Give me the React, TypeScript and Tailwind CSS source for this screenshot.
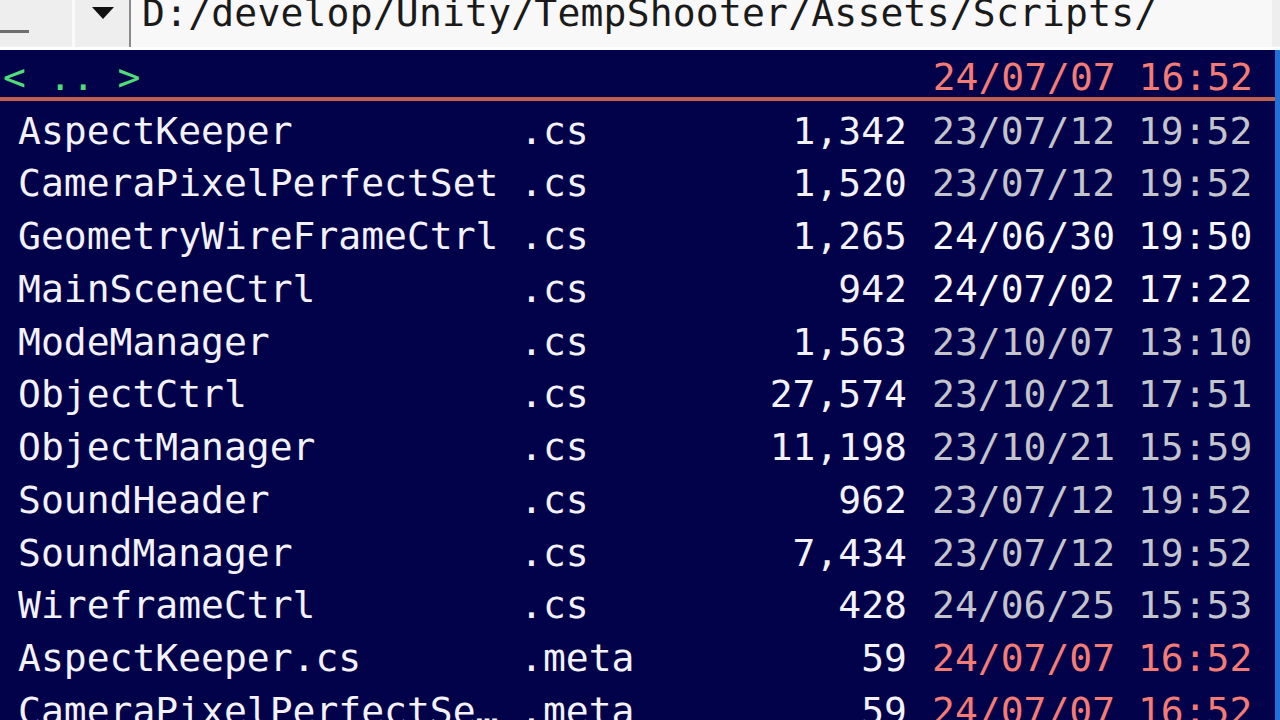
import React from 'react';

type Entry = {
  name: string;
  ext: string;
  size: string;
  date: string;
  tone: 'old' | 'recent' | 'today';
};

const entries: Entry[] = [
  { name: 'AspectKeeper', ext: '.cs', size: '1,342', date: '23/07/12 19:52', tone: 'old' },
  { name: 'CameraPixelPerfectSet', ext: '.cs', size: '1,520', date: '23/07/12 19:52', tone: 'old' },
  { name: 'GeometryWireFrameCtrl', ext: '.cs', size: '1,265', date: '24/06/30 19:50', tone: 'recent' },
  { name: 'MainSceneCtrl', ext: '.cs', size: '942', date: '24/07/02 17:22', tone: 'recent' },
  { name: 'ModeManager', ext: '.cs', size: '1,563', date: '23/10/07 13:10', tone: 'old' },
  { name: 'ObjectCtrl', ext: '.cs', size: '27,574', date: '23/10/21 17:51', tone: 'old' },
  { name: 'ObjectManager', ext: '.cs', size: '11,198', date: '23/10/21 15:59', tone: 'old' },
  { name: 'SoundHeader', ext: '.cs', size: '962', date: '23/07/12 19:52', tone: 'old' },
  { name: 'SoundManager', ext: '.cs', size: '7,434', date: '23/07/12 19:52', tone: 'old' },
  { name: 'WireframeCtrl', ext: '.cs', size: '428', date: '24/06/25 15:53', tone: 'old' },
  { name: 'AspectKeeper.cs', ext: '.meta', size: '59', date: '24/07/07 16:52', tone: 'today' },
  { name: 'CameraPixelPerfectSe\u2026', ext: '.meta', size: '59', date: '24/07/07 16:52', tone: 'today' },
];

const dateColor = {
  old: 'text-[#c4c4cc]',
  recent: 'text-[#f6f6f6]',
  today: 'text-[#f47c74]',
};

const mono = "font-['DejaVu_Sans_Mono','Liberation_Mono',monospace] text-[38px] whitespace-pre";

export default function App() {
  return (
    <div className={`w-[1280px] h-[720px] overflow-hidden flex flex-col bg-[#02024a] ${mono}`}>
      {/* Path bar */}
      <div className="h-[50px] flex bg-[#eeeeee] border-b-[3px] border-white shrink-0">
        <div className="w-[72px] flex flex-col pt-[30px]">
          <div className="w-[29px] h-[3px] bg-[#6e6e6e]" />
        </div>
        <div className="w-[3px] bg-[#fafafa]" />
        <div className="w-[54px] flex justify-center pt-[7px] pl-[2px]">
          <svg width="22" height="12" viewBox="0 0 22 12">
            <polygon points="0,0 22,0 11,12" fill="#111" />
          </svg>
        </div>
        <div className="w-[2px] bg-[#8a8a8a]" />
        <div className="flex-1 bg-[#f8f8f8] pl-[11px] overflow-hidden mr-[8px]">
          <div className="leading-[38px] mt-[-6px] text-[#1a1a1a] tracking-[0.2px]">D:/develop/Unity/TempShooter/Assets/Scripts/</div>
        </div>
      </div>

      <div className="flex-1 flex">
        <div className="flex-1 flex flex-col">
          {/* Header row */}
          <div className="h-[47px] pt-[8px] leading-[38px] flex pl-[3px] pr-[22px] shrink-0">
            <span className="flex-1 text-[#50dc78]">&lt; .. &gt;</span>
            <span className="text-[#f47c74]">24/07/07 16:52</span>
          </div>
          <div className="h-[4px] bg-[#c0604c] shrink-0" />

          {/* File list */}
          <div className="pt-[3.5px] flex flex-col">
            {entries.map((e, i) => (
              <div key={i} className="h-[52.75px] leading-[52.75px] flex pl-[18px] pr-[22px] shrink-0">
                <span className="w-[502px] text-[#f2f2f8] overflow-hidden">{e.name}</span>
                <span className="flex-1 text-[#f2f2f8]">{e.ext}</span>
                <span className="text-[#f2f2f8] text-right">{e.size}</span>
                <span className={`ml-[25px] w-[321px] ${dateColor[e.tone]}`}>{e.date}</span>
              </div>
            ))}
          </div>
        </div>
        <div className="w-[5px] bg-[#2170d6]" />
      </div>
    </div>
  );
}
